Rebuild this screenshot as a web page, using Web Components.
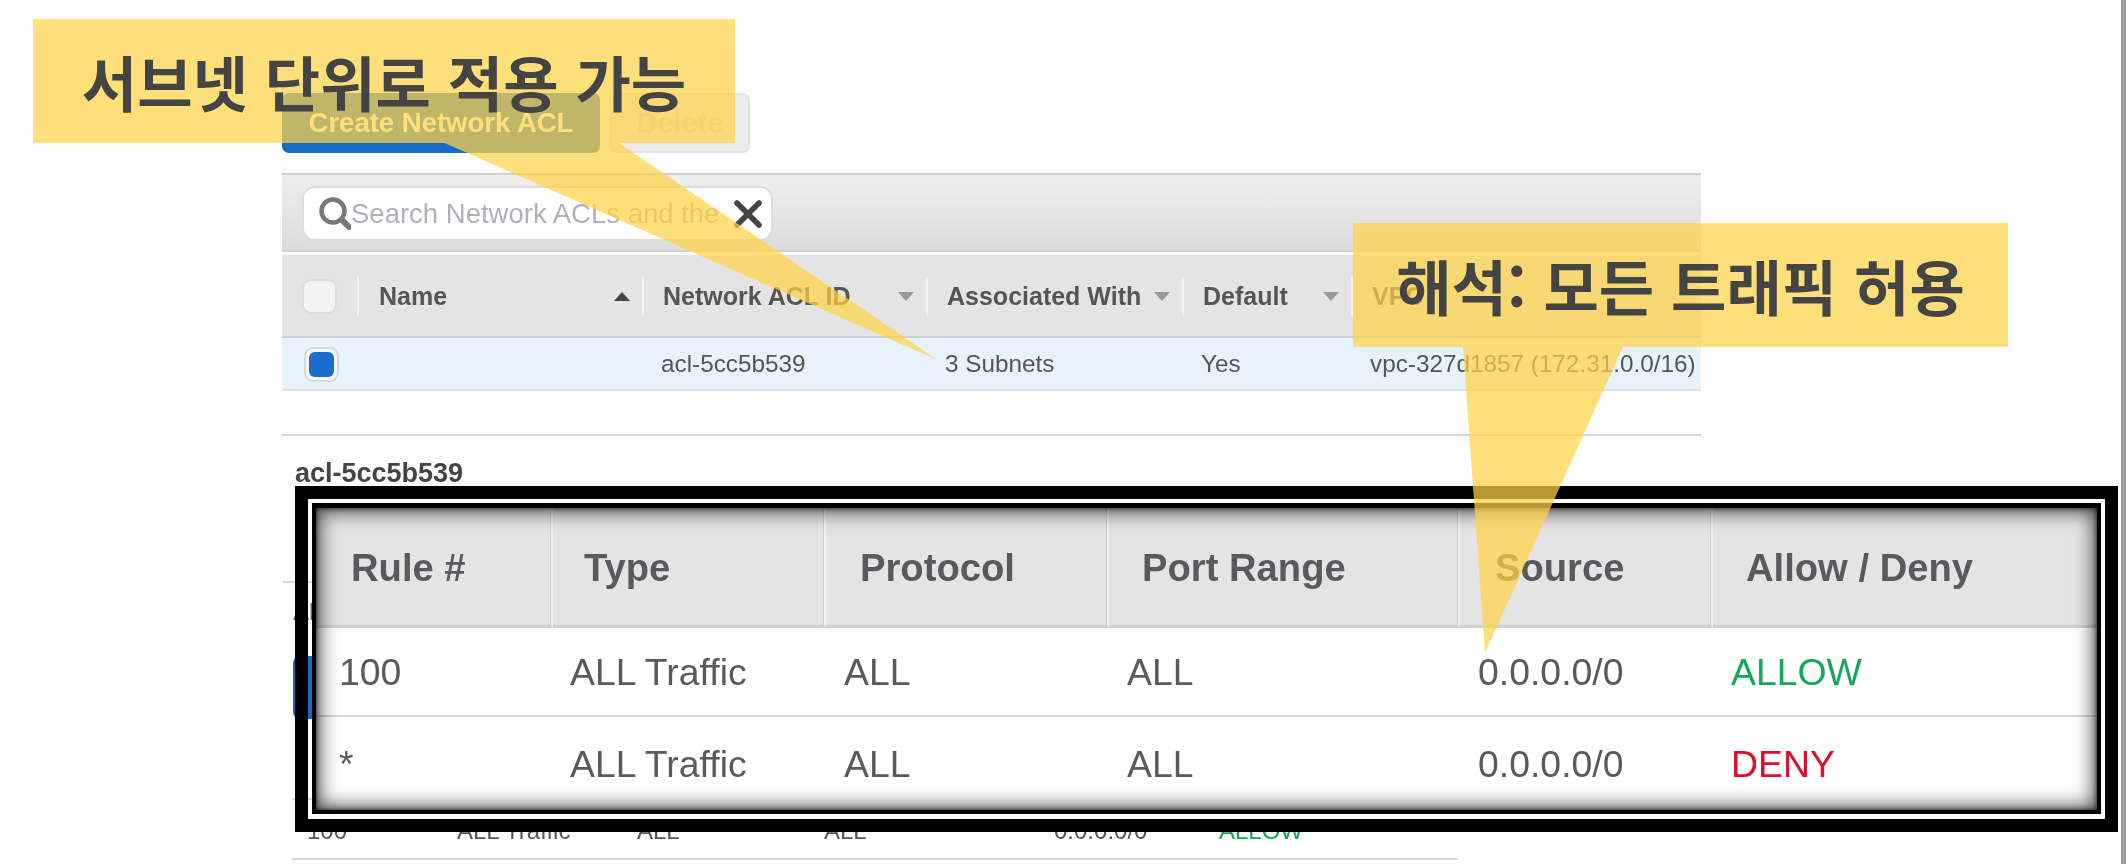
<!DOCTYPE html>
<html lang="ko"><head><meta charset="utf-8"><title>Network ACL</title>
<style>html,body{margin:0;padding:0;background:#fdfdfd}</style></head>
<body>
<acl-page>
  <acl-buttons></acl-buttons>
  <acl-list></acl-list>
  <acl-detail></acl-detail>
  <acl-rules></acl-rules>
  <acl-callout slot="over" style="left:33px;top:19px;width:702px;height:124px" tail="411.5,124 586,124 904.5,341">서브넷 단위로 적용 가능</acl-callout>
  <acl-callout slot="over" style="left:1353px;top:223px;width:655px;height:124px" tail="110,124 270,124 132,430">해석: 모든 트래픽 허용</acl-callout>
</acl-page>
<script>
const FONT='"Liberation Sans",Arial,sans-serif';
function def(name,html,setup){
  customElements.define(name,class extends HTMLElement{
    connectedCallback(){
      if(this.shadowRoot)return;
      const r=this.attachShadow({mode:'open'});
      r.innerHTML=html;
      if(setup)setup(this,r);
    }
  });
}
def('acl-page',`<style>
:host{display:grid;grid-template-columns:2121px 5px;width:2126px;height:864px;overflow:hidden;position:relative;font-family:${FONT};color:#555;background:#fdfdfd}
.main{padding-top:93px;filter:blur(.45px);min-width:0}
.strip{background:#9c9c9c}
.over{position:absolute;inset:0;pointer-events:none}
</style><div class="main"><slot></slot></div><div class="strip"></div><div class="over"><slot name="over"></slot></div>`);

def('acl-buttons',`<style>
:host{display:flex;gap:10px;margin-left:282px;height:60px;font:bold 29px ${FONT}}
div{display:flex;align-items:center;justify-content:center;border-radius:7px;box-sizing:border-box}
.c{width:318px;background:#1a6bc4;color:#fff;font-size:27.5px}
.d{width:140px;background:#ecebef;color:#d6d6d8;border:2px solid #e4e4e8}
</style><div class="c">Create Network ACL</div><div class="d">Delete</div>`);

const arrow=(up,c)=>`<svg width="16" height="9" viewBox="0 0 16 9" style="position:absolute;right:12px;top:37px"><path d="${up?'M8 0 16 9H0Z':'M0 0H16L8 9Z'}" fill="${c}"/></svg>`;
def('acl-list',`<style>
:host{display:block;margin:20px 0 0 282px;width:1419px}
.tool{height:79px;box-sizing:border-box;border-top:2px solid #cfcfcf;border-bottom:2px solid #d2d2d2;background:linear-gradient(#efeeef,#dddcdd);padding:11px 0 0 20px}
.search{display:flex;align-items:center;width:471px;height:55px;box-sizing:border-box;background:#fff;border:2px solid #dcdcdc;border-radius:13px;padding-left:15px;font-size:27.5px;color:#b0b0b6;white-space:nowrap;overflow:hidden}
.search svg{flex:none}
.search span{flex:1;overflow:hidden}
.head,.row{display:grid;grid-template-columns:75px 285px 284px 256px 169px 350px}
.head{height:83px;margin-top:3px;box-sizing:border-box;background:#e5e4e4;border-bottom:2px solid #cdcdcd;font-weight:bold;font-size:25px;align-items:center}
.head>div{position:relative;height:100%;display:flex;align-items:center;padding:1px 0 0 21px;box-sizing:border-box}
.head>div:nth-child(2){padding-left:22px}
.head>div+div::before{content:"";position:absolute;left:0;top:22px;height:39px;width:2px;background:#f4f3f3}
.head>div:first-child,.row>div:first-child{padding-left:20px}
.cb{width:35px;height:35px;box-sizing:border-box;background:#f5f4f4;border:2px solid #dedddd;border-radius:9px}
.row{height:53px;box-sizing:border-box;background:#e6f2fd;border-bottom:2px solid #dbe1e7;font-size:24.3px;align-items:center}
.row>div{padding:1px 0 0 19px;white-space:nowrap}
.sel{width:35px;height:35px;margin-left:2px;box-sizing:border-box;padding:3px;background:#f3f6f9;border:2px solid #d8d9dc;border-radius:9px}
.sel i{display:block;width:100%;height:100%;background:#1b6dcb;border-radius:6px}
.rule{height:2px;background:#d6d6d6;margin-top:43px}
</style>
<div class="tool"><div class="search">
<svg width="32" height="33" viewBox="0 0 32 33" fill="none" stroke="#777" stroke-width="4.5" stroke-linecap="round"><circle cx="14" cy="14" r="11.5"/><path d="M23 23 30 30" stroke-width="6"/></svg>
<span>Search Network ACLs and the</span>
<svg width="30" height="30" viewBox="0 0 30 30" stroke="#444" stroke-width="5.5" stroke-linecap="round" style="margin-right:8px"><path d="M4 4 26 26M26 4 4 26"/></svg>
</div></div>
<div class="head">
<div><div class="cb"></div></div>
<div>Name${arrow(true,'#444')}</div>
<div>Network ACL ID${arrow(false,'#999')}</div>
<div>Associated With${arrow(false,'#999')}</div>
<div>Default${arrow(false,'#999')}</div>
<div>VPC</div>
</div>
<div class="row"><div><div class="sel"><i></i></div></div><div></div><div>acl-5cc5b539</div><div>3 Subnets</div><div>Yes</div><div>vpc-327d1857 (172.31.0.0/16)</div></div>
<div class="rule"></div>`);

def('acl-detail',`<style>
:host{display:block;margin-left:283px;color:#555}
.label{margin:22px 0 0 12px;height:30px;font:bold 27px/30px ${FONT};color:#444}
.line{height:2px;background:#d9d9d9}
.tab{margin:14px 0 0 10px;font-size:24px;line-height:30px;color:#666}
.btn{margin:29px 0 0 10px;width:160px;height:63px;background:#1b68bf;border-radius:7px}
.back{display:grid;grid-template-columns:150px 180px 187px 230px 165px 100px;margin:16px 0 0 24px;font-size:24px;line-height:30px;white-space:nowrap}
.back b{font-weight:normal;color:#1aa55a}
</style>
<div class="label">acl-5cc5b539</div>
<div class="line" style="margin-top:93px;width:300px"></div>
<div class="tab">Allow</div>
<div class="btn"></div>
<div class="line" style="margin:79px 0 0 9px;width:300px"></div>
<div class="back"><span>100</span><span>ALL Traffic</span><span>ALL</span><span>ALL</span><span>0.0.0.0/0</span><b>ALLOW</b></div>
<div class="line" style="margin:12px 0 0 9px;width:1166px"></div>`);

def('acl-rules',`<style>
:host{display:block;position:absolute;left:295px;top:486px;width:1823px;height:346px;box-sizing:border-box;border:13px solid #000;padding:4px 4px 5px;font-family:${FONT}}
.in{border:4px solid #000;border-top-width:5px;height:100%;box-sizing:border-box;background:#fff;position:relative}
.t{display:grid;grid-template-columns:237px 273px 283px 351px 253px 1fr;grid-template-rows:120px 89px 1fr;height:100%;font-size:37.4px;color:#5a5a5e;filter:blur(.5px)}
.t>div{display:flex;align-items:center;white-space:nowrap;box-sizing:border-box;border-bottom:2px solid #dadada;padding-top:2px}
.h{background:#e5e4e5;font-weight:bold;font-size:38.2px;border-right:2px solid #f3f3f3;box-shadow:inset -1px 0 0 #ccc;border-bottom:3px solid #d0d0d0!important;padding:4px 0 0 35px}
.h.l{border-right:0;box-shadow:none}
.t>div.e{border-bottom:0}
.ok{color:#16a65a}.no{color:#d8102e}
.sh{position:absolute;inset:0;box-shadow:inset 0 0 20px 3px rgba(0,0,0,.72),inset 0 0 5px rgba(0,0,0,.8);pointer-events:none}
</style><div class="in"><div class="t">
<div class="h">Rule #</div><div class="h" style="padding-left:31px">Type</div><div class="h" style="padding-left:34px">Protocol</div><div class="h" style="padding-left:33px">Port Range</div><div class="h">Source</div><div class="h l" style="padding-left:33px">Allow / Deny</div>
<div style="padding-left:23px">100</div><div style="padding-left:17px">ALL Traffic</div><div style="padding-left:18px">ALL</div><div style="padding-left:18px">ALL</div><div style="padding-left:18px">0.0.0.0/0</div><div class="ok" style="padding-left:18px">ALLOW</div>
<div class="e" style="padding-left:23px">*</div><div class="e" style="padding-left:17px">ALL Traffic</div><div class="e" style="padding-left:18px">ALL</div><div class="e" style="padding-left:18px">ALL</div><div class="e" style="padding-left:18px">0.0.0.0/0</div><div class="e no" style="padding-left:18px">DENY</div>
</div><div class="sh"></div></div>`);

def('acl-callout',`<style>
:host{display:flex;position:absolute;align-items:center;justify-content:center;background:rgba(255,210,70,.72);font:bold 60.2px/1 "Noto Sans CJK KR","Liberation Sans",sans-serif;color:#444;white-space:nowrap}
svg{position:absolute;left:0;top:0;overflow:visible;width:1px;height:1px}
polygon{fill:rgba(255,210,70,.72)}
</style><svg><polygon></polygon></svg><slot></slot>`,(el,r)=>{
  r.querySelector('polygon').setAttribute('points',el.getAttribute('tail'));
});
</script>
</body></html>
